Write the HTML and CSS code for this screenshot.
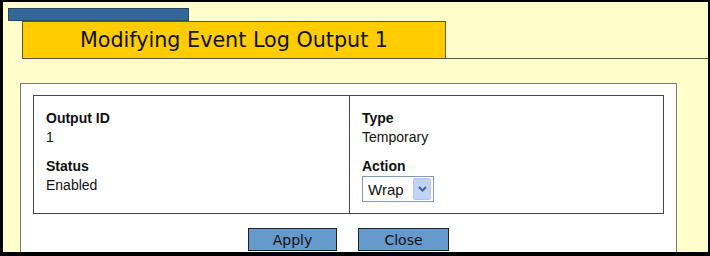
FILE: index.html
```html
<!DOCTYPE html>
<html lang="en">

<head>
    <meta charset="UTF-8">
    <meta name="viewport" content="width=device-width, initial-scale=1.0">
    <title>Modifying Event Log Output 1</title>
    <link rel="stylesheet" href="styles.css">
</head>

<body>

    <div class="frame">
        <div class="tab-bar"></div>
        <div class="title-row">
            <h1 class="title">Modifying Event Log Output 1</h1>
            <div class="title-line"></div>
        </div>

        <div class="panel">
            <div class="details">
                <div class="col">
                    <div class="field">
                        <div class="label">Output ID</div>
                        <div class="value">1</div>
                    </div>
                    <div class="field">
                        <div class="label">Status</div>
                        <div class="value">Enabled</div>
                    </div>
                </div>
                <div class="col col-right">
                    <div class="field">
                        <div class="label">Type</div>
                        <div class="value">Temporary</div>
                    </div>
                    <div class="field">
                        <div class="label">Action</div>
                        <div class="select">
                            <span class="select-text">Wrap</span>
                            <span class="select-arrow">
                                <svg width="9" height="6" viewBox="0 0 9 6">
                                    <path d="M1 1 L4.5 4.5 L8 1" fill="none" stroke="#4d6185" stroke-width="2" />
                                </svg>
                            </span>
                        </div>
                    </div>
                </div>
            </div>

            <div class="buttons">
                <button class="btn">Apply</button>
                <button class="btn btn-close">Close</button>
            </div>
        </div>
    </div>

</body>

</html>
```

FILE: styles.css
```css
body {
    margin: 0;
    font-family: "Liberation Sans", Arial, sans-serif;
}

.frame {
    box-sizing: border-box;
    width: 710px;
    height: 256px;
    overflow: hidden;
    background-color: #ffffcc;
    border-left: 3px solid black;
    border-top: 2px solid black;
    border-bottom: 4px solid black;
    border-right: 2px solid black;
    padding-top: 6px;
    padding-left: 5px;
}

.tab-bar {
    box-sizing: border-box;
    width: 181px;
    height: 13px;
    background-color: #336699;
    border: 1px solid #2b4560;
}

.title-row {
    display: flex;
    margin-left: 14px;
}

.title {
    box-sizing: border-box;
    width: 424px;
    height: 38px;
    margin: 0;
    background-color: #ffcc00;
    border: 1px solid #5a5540;
    font-family: "DejaVu Sans", Verdana, sans-serif;
    font-size: 20.7px;
    font-weight: normal;
    color: #111;
    text-align: center;
    line-height: 36px;
}

.title-line {
    flex: 1;
    border-bottom: 1px solid #5a5540;
}

.panel {
    box-sizing: border-box;
    width: 657px;
    height: 200px;
    margin-top: 24px;
    margin-left: 12px;
    padding: 11px 12px 0 12px;
    background-color: white;
    border: 1px solid #7a7a7a;
}

.details {
    display: grid;
    grid-template-columns: 315px 1fr;
    border: 1px solid #444;
}

.col {
    padding: 13px 12px 11px 12px;
}

.col-right {
    border-left: 1px solid #444;
}

.field {
    margin-bottom: 10px;
}

.field:last-child {
    margin-bottom: 0;
}

.label,
.value {
    font-size: 14px;
    line-height: 19px;
    color: #111;
}

.label {
    font-weight: bold;
}

.select {
    box-sizing: border-box;
    display: flex;
    align-items: center;
    justify-content: space-between;
    width: 72px;
    height: 26px;
    padding: 0 2px 0 5px;
    border: 1px solid #7f9db9;
    font-size: 15px;
    color: #111;
}

.select-arrow {
    display: flex;
    align-items: center;
    justify-content: center;
    width: 16px;
    height: 20px;
    background-color: #c1d3fb;
    border: 1px solid #b4c8f0;
    border-radius: 2px;
}

.buttons {
    display: flex;
    justify-content: center;
    gap: 21px;
    margin-top: 14px;
}

.btn {
    box-sizing: border-box;
    width: 89px;
    height: 23px;
    padding: 0;
    background-color: #6699cc;
    border: 1px solid #222;
    font-family: "DejaVu Sans", Verdana, sans-serif;
    font-size: 14px;
    color: #111;
    cursor: pointer;
}

.btn-close {
    width: 91px;
}
```
